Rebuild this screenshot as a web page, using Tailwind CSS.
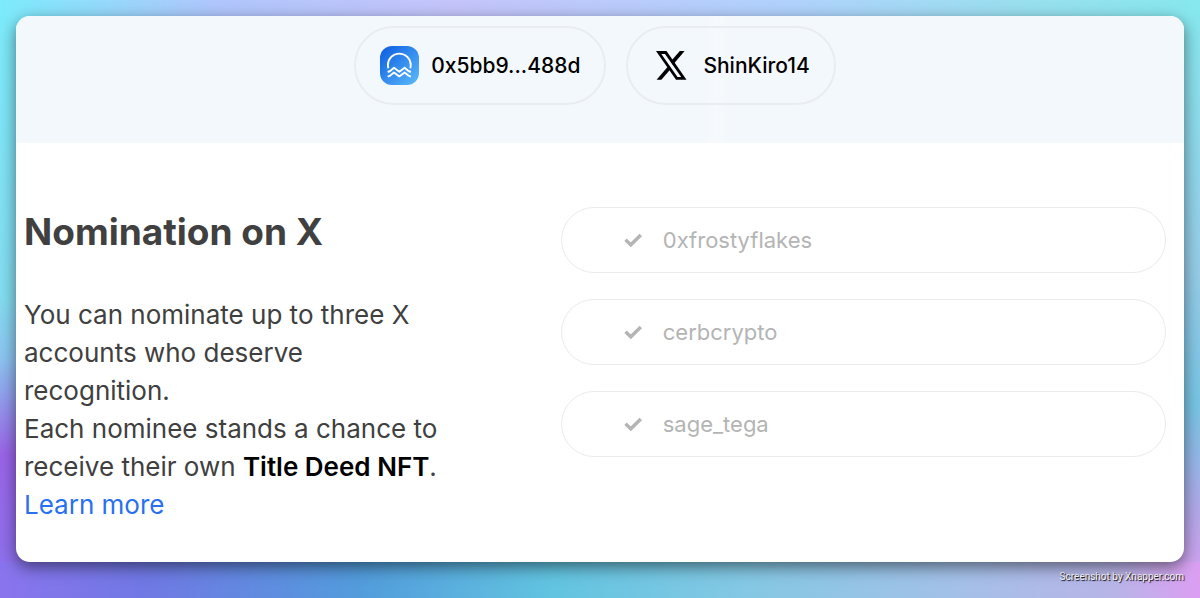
<!DOCTYPE html>
<html lang="en">
<head>
    <meta charset="UTF-8">
    <meta name="viewport" content="width=device-width, initial-scale=1.0">
    <title>Nomination on X</title>

    <!-- Include Tailwind CSS -->
    <script src="https://cdn.jsdelivr.net/npm/@tailwindcss/browser@4"></script>
</head>
<body class="min-h-screen flex flex-col px-4 pt-4 font-['Inter',sans-serif] text-[#404040] [background:linear-gradient(90deg,#7cebfb_0%,#b0c6fc_18%,#c4c4fa_38%,#b0d2fc_66%,#98e0ee_86%,#86e8ee_100%)_top/100%_16px_no-repeat,linear-gradient(180deg,#7cebfb_0%,#84dcf0_50%,#8cc4f0_60%,#9a64e8_76%,#8a74ee_100%)_left/50%_100%_no-repeat,linear-gradient(180deg,#86e8ee_0%,#96cce8_45%,#78c4e4_68%,#b4a8e8_86%,#dc9ef2_100%)_right/50%_100%_no-repeat]">

    <!-- Card -->
    <main class="relative grow flex flex-col rounded-[14px] bg-white shadow-[0_5px_16px_rgba(0,0,0,0.5)]">
        <!-- Connected accounts -->
        <header class="flex justify-center gap-5 pl-2 pr-[18px] pt-[10px] pb-[38px] rounded-t-[14px] bg-[linear-gradient(90deg,transparent_59%,#f7fafc_60%,transparent_61%)] bg-[#f3f8fc]">
            <button class="flex items-center gap-3 h-[79px] px-6 rounded-full border-2 border-[#e9edf0] text-black text-[21px] font-medium">
                <svg class="size-[39px]" viewBox="0 0 39 39" fill="none">
                    <defs>
                        <linearGradient id="wave" x1="0" y1="0" x2="1" y2="1">
                            <stop offset="0" stop-color="#0b5be0"/>
                            <stop offset="1" stop-color="#5cbcfb"/>
                        </linearGradient>
                    </defs>
                    <rect width="39" height="39" rx="12" fill="url(#wave)"/>
                    <g stroke="#fff" stroke-width="1.9" stroke-linejoin="round">
                        <path d="M8.300 22.300C8 21 7.900 20 7.900 19a11.400 11.400 0 0 1 22.800 0c0 1-.1 2-.4 3.300"/>
                        <path d="M7.700 26l2.500-1 3.800-3.200 5.300 4 5.300-4 3.800 3.200 2.500 1"/>
                        <path d="M7.700 30.600l2.500-1 3.800-3.200 5.300 4 5.300-4 3.800 3.200 2.500 1"/>
                    </g>
                </svg>
                0x5bb9...488d
            </button>
            <button class="flex items-center gap-3 h-[79px] px-6 rounded-full border-2 border-[#e9edf0] text-black text-[21px] font-medium">
                <svg class="size-[39px]" viewBox="0 0 39 39" fill="black">
                    <path fill-rule="evenodd" d="M4 5h10.500l20 28.800H24zM9.300 7.900l16.200 23.100h3.700L13 7.900z"/>
                    <path d="M27.800 5h4.800L21 18.700l-2.300-3.100zM4.600 33.800h4.800l9.700-11.300-2.300-3.100z"/>
                </svg>
                ShinKiro14
            </button>
        </header>

        <!-- Nomination -->
        <section class="grid grid-cols-[1fr_53%] pl-2 pr-[18px] pt-16 pb-9">
            <div>
                <h1 class="text-[37px] leading-[50px] font-bold">Nomination on X</h1>
                <p class="mt-[39px] text-[26px] leading-[38px]">
                    You can nominate up to three X<br>accounts who deserve<br>recognition.<br>
                    Each nominee stands a chance to<br>receive their own <strong class="font-semibold text-black">Title Deed NFT</strong>.<br>
                    <a href="#" class="text-[#2970f0]">Learn more</a>
                </p>
            </div>
            <div class="flex flex-col gap-[26px] text-[22px] text-[#b4b4b4]">
                <label class="flex items-center gap-5 h-[66px] px-[62px] rounded-full border border-[#ebebeb]">
                    <svg class="size-[19px] shrink-0" viewBox="0 0 19 19" fill="none" stroke="currentColor" stroke-width="3.4"><path d="M1.500 8.800l5.300 5L16.800 4"/></svg>
                    <input type="text" value="0xfrostyflakes" aria-label="Nominee 1" readonly class="grow min-w-0 outline-none">
                </label>
                <label class="flex items-center gap-5 h-[66px] px-[62px] rounded-full border border-[#ebebeb]">
                    <svg class="size-[19px] shrink-0" viewBox="0 0 19 19" fill="none" stroke="currentColor" stroke-width="3.4"><path d="M1.500 8.800l5.300 5L16.800 4"/></svg>
                    <input type="text" value="cerbcrypto" aria-label="Nominee 2" readonly class="grow min-w-0 outline-none">
                </label>
                <label class="flex items-center gap-5 h-[66px] px-[62px] rounded-full border border-[#ebebeb]">
                    <svg class="size-[19px] shrink-0" viewBox="0 0 19 19" fill="none" stroke="currentColor" stroke-width="3.4"><path d="M1.500 8.800l5.300 5L16.800 4"/></svg>
                    <input type="text" value="sage_tega" aria-label="Nominee 3" readonly class="grow min-w-0 outline-none">
                </label>
            </div>
        </section>
    </main>

    <footer class="-mx-4 px-4 h-9 pt-[7px] text-right font-['Roboto',sans-serif] text-[10px] leading-4 text-white [text-shadow:1px_1px_1px_#000] bg-[linear-gradient(90deg,#8a74ee_0%,#7078e4_12%,#529cdc_30%,#62c4e0_46%,#84c8e4_62%,#a4c0e8_80%,#b8b4e8_93%,#dc9ef2_100%)]">Screenshot by Xnapper.com</footer>

</body>
</html>
